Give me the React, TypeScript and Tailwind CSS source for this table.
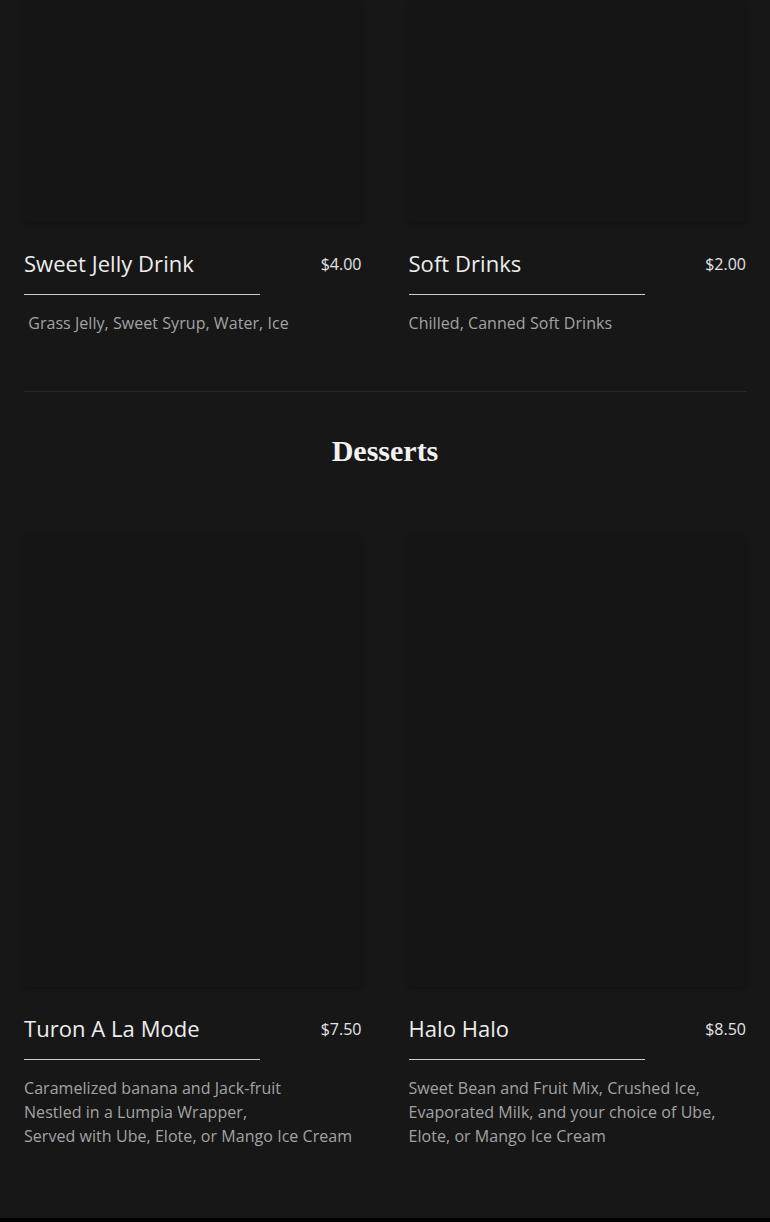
const sans = { fontFamily: '"Open Sans", "Noto Sans", sans-serif' };

type Item = {
  name: string;
  price: string;
  desc: React.ReactNode;
};

const drinks: Item[] = [
  {
    name: "Sweet Jelly Drink",
    price: "$4.00",
    desc: "\u00a0Grass Jelly, Sweet Syrup, Water, Ice",
  },
  { name: "Soft Drinks", price: "$2.00", desc: "Chilled, Canned Soft Drinks" },
];

const desserts: Item[] = [
  {
    name: "Turon A La Mode",
    price: "$7.50",
    desc: (
      <>
        Caramelized banana and Jack-fruit
        <br />
        Nestled in a Lumpia Wrapper,
        <br />
        Served with Ube, Elote, or Mango Ice Cream
      </>
    ),
  },
  {
    name: "Halo Halo",
    price: "$8.50",
    desc: "Sweet Bean and Fruit Mix, Crushed Ice, Evaporated Milk, and your choice of Ube, Elote, or Mango Ice Cream",
  },
];

function MenuCard({ item, imgH }: { item: Item; imgH: string }) {
  return (
    <div className="flex flex-col">
      {/* photo placeholder */}
      <div
        className={`${imgH} w-full rounded-sm bg-[#151515] shadow-[0_2px_4px_rgba(0,0,0,0.3)]`}
      />
      <div className="mt-[25px] flex items-center justify-between">
        <h3 className="text-[22px] leading-[33px] tracking-[0.05px] text-[#ededed]">
          {item.name}
        </h3>
        <span className="text-base leading-6 text-[#e4e4e4]">{item.price}</span>
      </div>
      <div className="mt-[14px] h-px w-[236px] bg-[#cfcfcf]" />
      <p className="mt-4 text-base leading-6 tracking-[0.05px] text-[#a3a3a3]">
        {item.desc}
      </p>
    </div>
  );
}

export default function App() {
  return (
    <div className="min-h-[1222px] bg-[#171717]" style={sans}>
      <div className="px-6">
        {/* Drinks (scrolled) */}
        <div className="grid grid-cols-2 gap-x-[47px]">
          {drinks.map((d) => (
            <MenuCard key={d.name} item={d} imgH="h-[222px]" />
          ))}
        </div>

        <div className="mt-[56px] h-px bg-[#2a2a2a]" />

        {/* Desserts */}
        <h2
          className="mt-[41px] text-center text-[30px] font-bold leading-[36px] text-[#f2f2f2]"
          style={{ fontFamily: '"Liberation Serif", "DejaVu Serif", serif' }}
        >
          Desserts
        </h2>

        <div className="mt-[65px] grid grid-cols-2 gap-x-[47px]">
          {desserts.map((d) => (
            <MenuCard key={d.name} item={d} imgH="h-[453px]" />
          ))}
        </div>
      </div>

      <div className="mt-[70px] h-[60px] bg-black" />
    </div>
  );
}
